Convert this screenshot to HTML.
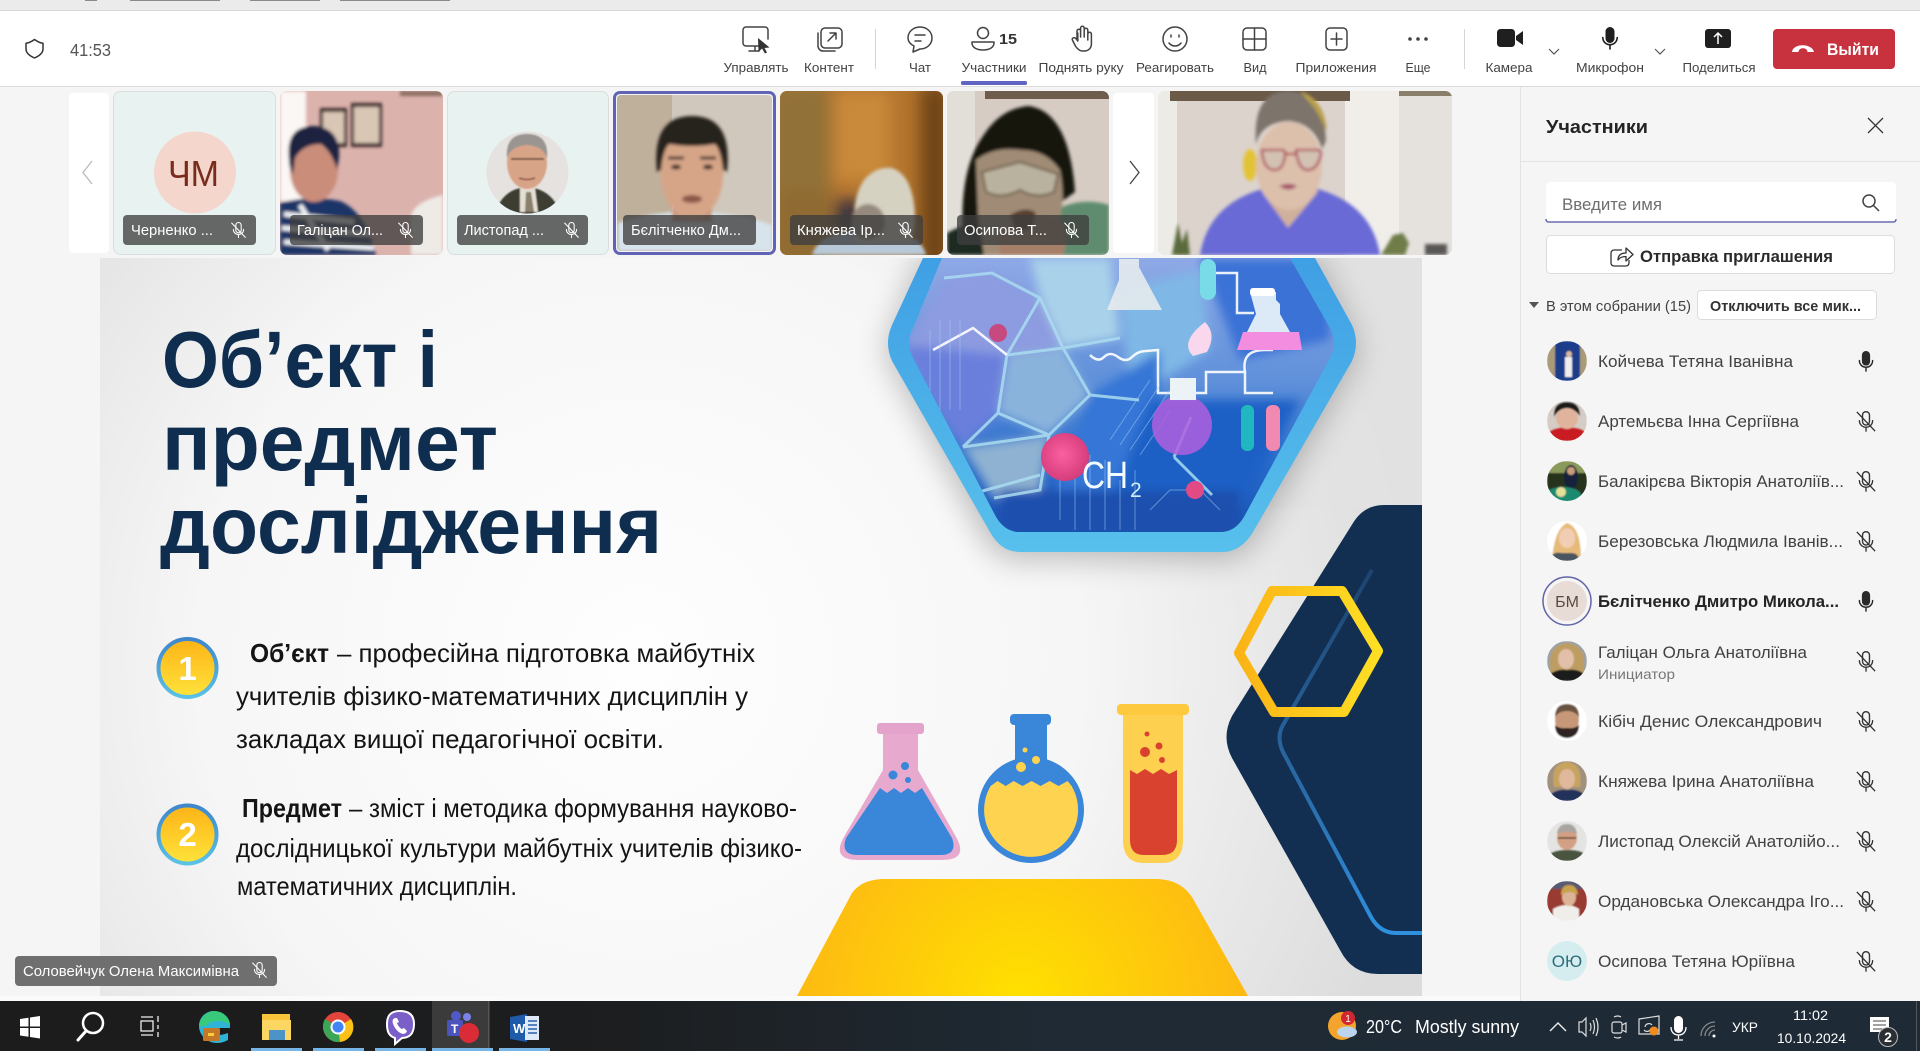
<!DOCTYPE html>
<html lang="uk"><head><meta charset="utf-8"><title>Собрание</title>
<style>
html,body{margin:0;padding:0;width:1920px;height:1051px;overflow:hidden;background:#f5f5f5}
svg{display:block;position:absolute;left:0;top:0}
text{font-family:"Liberation Sans","Noto Sans CJK SC",sans-serif}
.tb{font-size:13px;fill:#424242;text-anchor:middle}
.n{font-size:16.5px;fill:#424242}
.p{font-size:14.5px;fill:#fff}
.s{font-size:26px;fill:#141414}
.st{font-size:17px;fill:#fff}
</style></head><body>
<svg width="1920" height="1051" viewBox="0 0 1920 1051" xmlns="http://www.w3.org/2000/svg">
<defs>
<filter id="b1" x="-10%" y="-10%" width="120%" height="120%"><feGaussianBlur stdDeviation="1.6"/></filter>
<filter id="a1" x="-10%" y="-10%" width="120%" height="120%"><feGaussianBlur stdDeviation="0.9"/></filter>
<filter id="b3" x="-30%" y="-30%" width="160%" height="160%"><feGaussianBlur stdDeviation="5"/></filter>
<filter id="b8" x="-40%" y="-40%" width="180%" height="180%"><feGaussianBlur stdDeviation="8"/></filter>
<filter id="b20" x="-30%" y="-30%" width="160%" height="160%"><feGaussianBlur stdDeviation="16"/></filter>
<radialGradient id="slideBg" gradientUnits="userSpaceOnUse" cx="640" cy="660" r="800"><stop offset="0" stop-color="#fefefe"/><stop offset=".55" stop-color="#f6f6f6"/><stop offset="1" stop-color="#dcdcdc"/></radialGradient>
<linearGradient id="hexO" x1="0" y1="0" x2="0" y2="1"><stop offset="0" stop-color="#3f9fe4"/><stop offset="1" stop-color="#58c0ec"/></linearGradient>
<linearGradient id="hexI" x1="0" y1="0" x2="0" y2="1"><stop offset="0" stop-color="#8fa9e6"/><stop offset=".45" stop-color="#5f90da"/><stop offset=".75" stop-color="#2a6ccb"/><stop offset="1" stop-color="#1b50b0"/></linearGradient>
<linearGradient id="line" x1="0" y1="0" x2="0" y2="1"><stop offset="0" stop-color="#1e4470"/><stop offset=".6" stop-color="#2a6ba8"/><stop offset="1" stop-color="#2f90e0"/></linearGradient>
<linearGradient id="yh" x1="0" y1="0" x2="1" y2="0"><stop offset="0" stop-color="#fbb316"/><stop offset="1" stop-color="#fedf24"/></linearGradient>
<radialGradient id="tr" gradientUnits="userSpaceOnUse" cx="1020" cy="1000" r="230"><stop offset="0" stop-color="#ffe000"/><stop offset="1" stop-color="#fdb913"/></radialGradient>
<linearGradient id="numY" x1="0" y1="0" x2="0" y2="1"><stop offset="0" stop-color="#fcb316"/><stop offset="1" stop-color="#ffe33b"/></linearGradient>
<linearGradient id="numB" x1="0" y1="0" x2="0" y2="1"><stop offset="0" stop-color="#3f86cc"/><stop offset="1" stop-color="#59c2e6"/></linearGradient>
<linearGradient id="task" x1="0" y1="0" x2="1" y2="0"><stop offset="0" stop-color="#1c1c1c"/><stop offset=".3" stop-color="#1c1d1e"/><stop offset=".55" stop-color="#1f2a34"/><stop offset="1" stop-color="#1e2a36"/></linearGradient>
<radialGradient id="ball" cx=".45" cy=".45" r=".6"><stop offset="0" stop-color="#fb5f9f"/><stop offset="1" stop-color="#d23a78"/></radialGradient>
<clipPath id="slide"><rect x="100" y="258" width="1322" height="738"/></clipPath>
<clipPath id="hexClip"><path d="M942 258H1290L1330 328Q1338 343 1330 358L1245 515Q1236 532 1220 532H1020Q1004 532 995 515L913 358Q905 343 913 328Z"/></clipPath>
<clipPath id="t2"><rect x="280" y="91" width="163" height="164" rx="7"/></clipPath>
<clipPath id="t3"><circle cx="527.5" cy="172.5" r="41"/></clipPath>
<clipPath id="t4"><rect x="617" y="95" width="155" height="156" rx="4"/></clipPath>
<clipPath id="t5"><rect x="780" y="91" width="163" height="164" rx="7"/></clipPath>
<clipPath id="t6"><rect x="947" y="91" width="162" height="164" rx="7"/></clipPath>
<clipPath id="t7"><rect x="1158" y="91" width="294" height="164" rx="7"/></clipPath>
<clipPath id="av"><circle cx="0" cy="0" r="20"/></clipPath>
<symbol id="micoff" viewBox="0 0 20 24" overflow="visible"><path d="M6.2 4.5a3.8 3.8 0 0 1 7.6 0v7a3.8 3.8 0 0 1-7.6 0zM2.8 10.5c0 4 3 7.2 7.2 7.2s7.2-3.2 7.2-7.2M10 17.7V22" fill="none" stroke="currentColor" stroke-width="1.5" stroke-linecap="round"/><path d="M0 1l20 21" stroke="currentColor" stroke-width="1.5"/></symbol>
<symbol id="micon" viewBox="0 0 20 24" overflow="visible"><rect x="5.5" y="0" width="9" height="16" rx="4.5" fill="currentColor"/><path d="M2.8 10.5c0 4 3 7.2 7.2 7.2s7.2-3.2 7.2-7.2M10 17.7V22" fill="none" stroke="currentColor" stroke-width="1.6" stroke-linecap="round"/></symbol>
</defs>

<!-- page -->
<rect width="1920" height="1051" fill="#f5f5f5"/>
<rect width="1920" height="10" fill="#ebebeb"/>
<rect y="10" width="1920" height="1" fill="#d6d6d6"/>
<g fill="#8a8a8a"><rect x="85" y="0" width="12" height="1"/><rect x="130" y="0" width="90" height="1"/><rect x="250" y="0" width="70" height="1"/><rect x="340" y="0" width="110" height="1"/></g>

<!-- toolbar -->
<rect y="11" width="1920" height="75" fill="#fff"/>
<rect y="86" width="1920" height="1" fill="#dcdcdc"/>
<path d="M34.500 39.500C31 42 28.500 43 26 43.300V49C26 53 30 56 34.500 58 39 56 43 53 43 49V43.300C40.500 43 38 42 34.500 39.500Z" fill="none" stroke="#333" stroke-width="1.500" stroke-linejoin="round"/>
<text x="70" y="56" font-size="17.500" fill="#555" textLength="41" lengthAdjust="spacingAndGlyphs">41:53</text>

<g fill="none" stroke="#424242" stroke-width="1.500" stroke-linecap="round" stroke-linejoin="round">
<path d="M759 46H746a3 3 0 0 1-3-3V30a3 3 0 0 1 3-3h19a3 3 0 0 1 3 3v9M755 46v5M749 51h10"/>
<rect x="821" y="28" width="21" height="20" rx="4"/><path d="M818 33v13a5 5 0 0 0 5 5h12M828 41l8-8M830 33h6v6"/>
<path d="M920 27c7 0 12 5 12 11s-5 11-12 11l-7 3 1-6c-4-2-6-5-6-8 0-6 5-11 12-11zM915 35h10M915 41h6"/>
<circle cx="983" cy="33" r="5.500"/><path d="M972 42h22v1c0 4-4 7-11 7s-11-3-11-7z"/>
<path d="M1077 39V31a1.800 1.800 0 0 1 3.600 0v6M1080.600 37V28a1.800 1.800 0 0 1 3.600 0v9M1084.200 37v-7a1.800 1.800 0 0 1 3.600 0v10M1087.800 38v-4a1.800 1.800 0 0 1 3.600 0v10c0 4-3 7-7 7h-2c-3 0-5-2-7-5l-3-6c-1-2 2-3 3.500-1.500l1.900 2.500V33"/>
<circle cx="1175" cy="39" r="12"/><path d="M1169 43c3 4 9 4 12 0"/><path d="M1171 35v2M1179 35v2"/>
<rect x="1243" y="28" width="23" height="22" rx="4"/><path d="M1254.500 28v22M1243 39h23"/>
<rect x="1326" y="28" width="21" height="22" rx="4"/><path d="M1336.500 33v12M1331 39h11"/>
</g>
<path d="M758 38l11.500 9.500-5 .5 2.500 4.500-2 1-3-5-3.500 3.500z" fill="#333"/>
<circle cx="1410" cy="39" r="1.800" fill="#424242"/><circle cx="1418" cy="39" r="1.800" fill="#424242"/><circle cx="1426" cy="39" r="1.800" fill="#424242"/>
<text x="999" y="44" font-size="14.500" font-weight="700" fill="#333" textLength="18" lengthAdjust="spacingAndGlyphs">15</text>
<rect x="875" y="29" width="1" height="40" fill="#d6d6d6"/><rect x="1464" y="29" width="1" height="40" fill="#d6d6d6"/>
<rect x="1497" y="29" width="18" height="18" rx="3.500" fill="#1f1f1f"/><path d="M1516 36l7-5v14l-7-5z" fill="#1f1f1f"/>
<path d="M1549 49l5 5 5-5M1655 49l5 5 5-5" fill="none" stroke="#555" stroke-width="1.200"/>
<use href="#micon" x="1600" y="27" width="20" height="24" color="#1f1f1f"/>
<rect x="1705" y="29" width="26" height="19" rx="3" fill="#1f1f1f"/><path d="M1718 44V34M1714 37l4-4 4 4" fill="none" stroke="#fff" stroke-width="1.500"/>
<rect x="1773" y="29" width="122" height="40" rx="4" fill="#c8323f"/>
<path d="M1792 52c1-9 20-9 22 0l-6.500 0c0-5-9-5-9 0z" fill="#fff"/>
<text x="1827" y="55" class="st" font-weight="700" textLength="52" lengthAdjust="spacingAndGlyphs">Выйти</text>
<g>
<text x="756" y="72" class="tb" textLength="65" lengthAdjust="spacingAndGlyphs">Управлять</text>
<text x="829" y="72" class="tb" textLength="50" lengthAdjust="spacingAndGlyphs">Контент</text>
<text x="920" y="72" class="tb" textLength="22" lengthAdjust="spacingAndGlyphs">Чат</text>
<text x="994" y="72" class="tb" textLength="65" lengthAdjust="spacingAndGlyphs">Участники</text>
<text x="1081" y="72" class="tb" textLength="85" lengthAdjust="spacingAndGlyphs">Поднять руку</text>
<text x="1175" y="72" class="tb" textLength="78" lengthAdjust="spacingAndGlyphs">Реагировать</text>
<text x="1255" y="72" class="tb" textLength="23" lengthAdjust="spacingAndGlyphs">Вид</text>
<text x="1336" y="72" class="tb" textLength="81" lengthAdjust="spacingAndGlyphs">Приложения</text>
<text x="1418" y="72" class="tb" textLength="25" lengthAdjust="spacingAndGlyphs">Еще</text>
<text x="1509" y="72" class="tb" textLength="47" lengthAdjust="spacingAndGlyphs">Камера</text>
<text x="1610" y="72" class="tb" textLength="68" lengthAdjust="spacingAndGlyphs">Микрофон</text>
<text x="1719" y="72" class="tb" textLength="73" lengthAdjust="spacingAndGlyphs">Поделиться</text>
</g>
<rect x="961" y="81" width="66" height="4" rx="1.500" fill="#6264c4"/>

<!-- video strip -->
<rect x="69" y="93" width="40" height="160" rx="4" fill="#fff"/>
<path d="M92 161l-9 11.500 9 11.500" fill="none" stroke="#bbb" stroke-width="1.300"/>
<!-- tile 1 -->
<rect x="113.500" y="91.500" width="162" height="163" rx="7" fill="#e8f2f0" stroke="#d9dedd"/>
<circle cx="195" cy="172.500" r="41" fill="#f4d6cc"/>
<text x="168" y="186" font-size="36" fill="#7a2c1c" textLength="51" lengthAdjust="spacingAndGlyphs">ЧМ</text>
<!-- tile 2 -->
<g clip-path="url(#t2)"><rect x="280" y="91" width="163" height="164" fill="#dcb2ad"/>
<g filter="url(#b1)"><rect x="280" y="91" width="26" height="110" fill="#fbf7f4"/><rect x="320" y="108" width="27" height="39" fill="#3a2a2c"/><rect x="323" y="112" width="21" height="31" fill="#d9c6b4"/><rect x="351" y="103" width="31" height="44" fill="#3a2a2c"/><rect x="354" y="107" width="25" height="36" fill="#d9c6b4"/>
<rect x="400" y="91" width="43" height="5" fill="#8a6e60"/>
<path d="M411 255v-40q5-14 32-20v60z" fill="#eeeae6"/>
<path d="M280 255v-52q30-8 60-2 25 10 36 54z" fill="#1a3568"/>
<path d="M284 214l70 8M282 228l88 6M284 242l90 6M300 205l28 45" stroke="#eef1f4" stroke-width="5" fill="none"/>
<ellipse cx="314" cy="170" rx="24" ry="32" fill="#c98d7a"/>
<path d="M289 160q-4-34 25-34 27 2 25 32l-2 12q-5-18-16-26-18 0-26 14l-2 16q-4-6-4-14z" fill="#1d2440"/>
</g></g>
<!-- tile 3 -->
<rect x="447.500" y="91.500" width="161" height="163" rx="7" fill="#e8f2f0" stroke="#d9dedd"/>
<g clip-path="url(#t3)"><rect x="486" y="131" width="83" height="83" fill="#e5e2df"/>
<g filter="url(#a1)"><path d="M495 215q6-26 32-28 26 2 34 28z" fill="#3c3c30"/><path d="M520 188h15l3 24h-18z" fill="#e4dfd4"/><path d="M526 192l5 0 3 20h-9z" fill="#8a7f6a"/>
<ellipse cx="527" cy="163" rx="20" ry="26" fill="#d8a487"/><path d="M507 158q-2-24 20-24 22 0 20 24-4-12-20-13-16 1-20 13z" fill="#9a9590"/>
<path d="M511 159h13M531 159h13M524 159h7" stroke="#5a4030" stroke-width="1.500"/><path d="M519 178q8 3 16 0" stroke="#8a4b3c" stroke-width="1.500" fill="none"/></g></g>
<!-- tile 4 -->
<rect x="613" y="91" width="163" height="164" rx="7" fill="#6163b5"/>
<rect x="616" y="94" width="157" height="158" rx="4" fill="#f4f4f8"/>
<g clip-path="url(#t4)"><rect x="617" y="95" width="155" height="156" fill="#d0c8bc"/><rect x="617" y="95" width="55" height="156" fill="#bfb09c"/>
<g filter="url(#b1)"><path d="M618 251v-28q30-10 70-12 50 2 84 14v26z" fill="#d8e4ec"/><rect x="672" y="192" width="40" height="30" fill="#c99a80"/>
<path d="M660 160q0-32 32-32 32 0 32 32 0 36-12 48-10 12-20 12-10 0-20-12-12-12-12-48z" fill="#d6a587"/>
<path d="M657 172q-6-56 35-56 41 0 35 56l-4-2q-2-20-8-26-22 4-46 0-6 6-8 26z" fill="#27201d"/>
<path d="M668 158h16M700 158h16" stroke="#2a2320" stroke-width="3"/><ellipse cx="676" cy="167" rx="5" ry="2.500" fill="#3a2c24"/><ellipse cx="708" cy="167" rx="5" ry="2.500" fill="#3a2c24"/><ellipse cx="692" cy="199" rx="10" ry="4" fill="#8d5648"/></g></g>
<!-- tile 5 -->
<g clip-path="url(#t5)"><rect x="780" y="91" width="163" height="164" fill="#b3742e"/>
<g filter="url(#b8)"><rect x="770" y="85" width="60" height="180" fill="#927137"/><rect x="835" y="91" width="55" height="90" fill="#c98a3a"/><rect x="920" y="85" width="30" height="180" fill="#6f4519"/><rect x="780" y="190" width="50" height="70" fill="#8f6a30"/><rect x="835" y="200" width="26" height="34" fill="#34313f"/></g>
<g filter="url(#b1)"><path d="M812 255q6-20 40-24h40q30 6 34 24z" fill="#b7c9d8"/><path d="M856 240q-6-40 8-60 12-14 28-12 18 6 22 36 3 24-4 38h-50z" fill="#d6d2c2"/><ellipse cx="868" cy="222" rx="17" ry="18" fill="#96897e"/></g></g>
<!-- tile 6 -->
<g clip-path="url(#t6)"><rect x="947" y="91" width="162" height="164" fill="#d6ccc4"/><rect x="947" y="91" width="28" height="164" fill="#e2ded8"/><rect x="985" y="91" width="124" height="8" fill="#6e5c4c"/>
<g filter="url(#b1)"><path d="M1047 255v-40q30-20 62-10v50z" fill="#5f8c6e"/><path d="M947 255v-22q20-12 50-10v32z" fill="#1f2a22"/>
<path d="M963 236q-4-66 20-100 18-28 46-30 40 6 46 86l-14 10-30-50-40 20-6 60z" fill="#141210"/>
<path d="M976 160q18-14 46-10 24 0 38 20 6 30-2 56l-12 29h-62l-6-40z" fill="#a08c76"/>
<path d="M982 172l38-10 38 12-4 18q-18 8-34-2-18 10-34 2z" fill="#b9b29e" stroke="#6a5a46" stroke-width="2"/>
<path d="M1000 255q-6-30 25-36 34-8 40 10 3 10-2 26z" fill="#a67f68"/><path d="M1010 215q16-10 26-2l-4 16-16 2z" fill="#5a4030"/></g></g>
<rect x="1113" y="93" width="41" height="160" rx="4" fill="#fff"/>
<path d="M1130 161l9 11.500-9 11.500" fill="none" stroke="#444" stroke-width="1.300"/>
<!-- tile 7 -->
<g clip-path="url(#t7)"><rect x="1158" y="91" width="294" height="164" fill="#dcd3cd"/><rect x="1158" y="91" width="19" height="164" fill="#ecebe6"/><rect x="1345" y="91" width="54" height="164" fill="#f1eeea"/><rect x="1399" y="91" width="53" height="164" fill="#e5e2de"/><rect x="1170" y="91" width="180" height="10" fill="#6a5a47"/><rect x="1399" y="91" width="53" height="5" fill="#8a7f6a"/>
<g filter="url(#b1)"><path d="M1172 255l6-32 4 20 5-14 3 26z" fill="#5a6b3a"/><path d="M1381 255l12-20 10-2 6 10-4 12z" fill="#6f7d48"/><rect x="1425" y="244" width="22" height="11" fill="#5a5654"/>
<path d="M1200 255q8-50 62-66h56q54 16 62 66z" fill="#696ad6"/>
<path d="M1262 192l26 36 30-36-8-14h-42z" fill="#d0b09c"/>
<ellipse cx="1250" cy="165" rx="7" ry="16" fill="#e3c336"/>
<ellipse cx="1289" cy="166" rx="33" ry="44" fill="#dcc0ac"/>
<path d="M1256 145q-4-52 30-54 38 0 40 50l-4 8q-8-26-34-28-28 2-32 24z" fill="#7d756c"/>
<path d="M1300 91q24 8 27 40l-12-22z" fill="#b89f4a"/>
<path d="M1262 150h20q4 0 3 6-2 14-10 14-12 0-13-20zM1296 150h22q4 0 2 8-4 12-12 12-10 0-12-20zM1285 154h11" fill="#c9c2b8" fill-opacity=".5" stroke="#a82a4a" stroke-width="2"/>
<path d="M1279 186q10-4 18 0-8 7-18 0z" fill="#a4516a"/></g></g>
<!-- name pills -->
<g fill="#3d3d3d" fill-opacity=".78">
<rect x="123" y="215" width="133" height="30" rx="4" fill="#5e5e5e" fill-opacity=".95"/><rect x="290" y="215" width="133" height="30" rx="4"/><rect x="457" y="215" width="131" height="30" rx="4" fill="#5e5e5e" fill-opacity=".95"/><rect x="623" y="215" width="133" height="30" rx="4"/><rect x="790" y="215" width="133" height="30" rx="4"/><rect x="957" y="215" width="132" height="30" rx="4"/>
</g>
<text x="131" y="235" class="p" textLength="82" lengthAdjust="spacingAndGlyphs">Черненко ...</text>
<text x="297" y="235" class="p" textLength="86" lengthAdjust="spacingAndGlyphs">Галіцан Ол...</text>
<text x="464" y="235" class="p" textLength="80" lengthAdjust="spacingAndGlyphs">Листопад ...</text>
<text x="631" y="235" class="p" textLength="110" lengthAdjust="spacingAndGlyphs">Бєлітченко Дм...</text>
<text x="797" y="235" class="p" textLength="88" lengthAdjust="spacingAndGlyphs">Княжева Ір...</text>
<text x="964" y="235" class="p" textLength="83" lengthAdjust="spacingAndGlyphs">Осипова Т...</text>
<g color="#fff"><use href="#micoff" x="231" y="222" width="15" height="17"/><use href="#micoff" x="398" y="222" width="15" height="17"/><use href="#micoff" x="564" y="222" width="15" height="17"/><use href="#micoff" x="898" y="222" width="15" height="17"/><use href="#micoff" x="1064" y="222" width="15" height="17"/></g>

<!-- slide -->
<rect x="0" y="996" width="1520" height="5" fill="#fafafa"/>
<g clip-path="url(#slide)">
<rect x="100" y="258" width="1322" height="738" fill="url(#slideBg)"/>
<rect x="1200" y="258" width="222" height="250" fill="#e2e2e2" opacity=".7"/>
<path d="M923 250H1315L1352 328Q1360 343 1352 358L1255 530Q1244 552 1225 552H1015Q996 552 985 530L892 358Q884 343 892 328Z" fill="#000" opacity=".26" filter="url(#b20)" transform="translate(0,6)"/>
<path d="M923 258H1315L1352 325Q1360 343 1352 361L1253 532Q1241 552 1222 552H1020Q1001 552 990 532L892 361Q884 343 892 325Z" fill="url(#hexO)"/>
<g clip-path="url(#hexClip)">
<rect x="900" y="258" width="440" height="275" fill="url(#hexI)"/>
<g filter="url(#b3)">
<path d="M905 345L944 278 992 273 1040 298 1063 348 1007 355z" fill="#8d9be0"/>
<path d="M1007 355L1063 348 1090 395 1049 435 998 413z" fill="#8ab3dc"/>
<path d="M905 345L1007 355 998 413 963 447 930 400z" fill="#6a7fdc"/>
<path d="M963 447L1049 435 1040 490 994 498z" fill="#8fb2d2"/>
<path d="M1040 298L1030 258H1110L1120 338 1063 348z" fill="#a9d2ea"/>
<path d="M1120 290L1200 270 1210 350 1130 400z" fill="#7fb8e6"/>
<path d="M1090 395L1160 350V530H1040z" fill="#3476d6"/>
<path d="M1200 258H1330V340L1240 360z" fill="#3a72d6"/>
<path d="M1150 400H1300L1230 530H1100z" fill="#1f60c6"/>
<path d="M1000 490H1240V535H1000z" fill="#1a4fae"/>
</g>
<g fill="none" stroke="#a9dcf0" stroke-width="3" opacity=".85"><path d="M944 278L992 273L1040 298L1063 348L1007 355L998 413L963 447M998 413L1049 435L1090 395L1063 348L1120 338M1007 355L1040 298M1049 435L1040 490L994 498M1090 395L1139 400M1174 457L1212 495M1174 457L1191 417M963 447L1049 435M950 500L1040 475"/></g>
<g fill="none" stroke="#fff" stroke-width="2.500" opacity=".9"><path d="M933 350L973 328L1007 355M1090 355q8 8 14 2t14 0 14 0 14-6l12-1v43h48v-21h39v21h28M1216 273h21v40h17M1245 372q-4-22 20-22h8"/></g>
<g fill="none" stroke="#9cc8f0" stroke-width="1" opacity=".55"><path d="M1060 440v80M1075 450v80M1090 455v75M1105 460v70M1120 480v50M1135 470v60M1150 510l20-20h30l20 20M1110 440l40-60M1120 445l40-60M1130 450l40-60M1140 455l30-44M930 330v70M940 320v90M950 320v90M960 320v90"/></g>
<circle cx="1065" cy="457" r="24" fill="url(#ball)"/><circle cx="998" cy="333" r="9" fill="#c64a7f"/><circle cx="1195" cy="490" r="9" fill="#e24a86"/>
<path d="M1119 259h20v8l23 43h-55l12-30z" fill="#e6ebed" opacity=".9"/><rect x="1200" y="259" width="16" height="41" rx="8" fill="#7adbe8"/>
<path d="M1250 292h26v8l4 4v10l20 36h-62l18-36z" fill="#eef7fb" opacity=".9"/><path d="M1243 332h56l3 18h-65z" fill="#f38de0"/><rect x="1250" y="288" width="25" height="8" rx="3" fill="#fff"/>
<path d="M1205 322q12 12 2 30l-14 4q-14-14 12-34z" fill="#f9d8ee"/>
<ellipse cx="1182" cy="425" rx="30" ry="30" fill="#b05fdd" opacity=".85"/><rect x="1170" y="378" width="26" height="22" fill="#ecf3f7"/>
<rect x="1241" y="405" width="13" height="46" rx="6" fill="#21b7c1"/><rect x="1266" y="405" width="14" height="46" rx="6" fill="#f08ab0"/>
<text x="1082" y="488" font-size="38" fill="#f2fbff" textLength="46" lengthAdjust="spacingAndGlyphs">CH</text>
<text x="1130" y="497" font-size="21" fill="#cfeef8">2</text>
</g>
<!-- navy shape -->
<path d="M1422 505H1384Q1364 505 1353 523L1232 716Q1221 737 1232 758L1340 950Q1352 974 1378 974H1422Z" fill="#122f52"/>
<path d="M1372 570L1283 725Q1276 737 1283 752L1371 917Q1380 933 1396 933H1422" fill="none" stroke="url(#line)" stroke-width="4"/>
<path d="M1272 591H1342L1378 651L1344 712H1274L1239 653Z" fill="none" stroke="url(#yh)" stroke-width="10" stroke-linejoin="round"/>
<!-- yellow table -->
<path d="M797 996L852 893Q862 879 885 879H1155Q1180 879 1192 897L1248 996Z" fill="url(#tr)"/>
<!-- pink flask -->
<path d="M883 730V770L845 835Q830 860 858 860H942Q970 860 955 835L918 770V730Z" fill="#e8a9cf"/><rect x="877" y="723" width="47" height="11" rx="3" fill="#e3a3ca"/>
<path d="M880 788l7 5 7-5 7 5 7-5 7 5 7-5 30 50q6 17-12 17H858q-18 0-12-17z" fill="#3a86d8"/>
<circle cx="893" cy="775" r="4.500" fill="#3a86d8"/><circle cx="905" cy="766" r="4" fill="#3a86d8"/><circle cx="908" cy="780" r="3" fill="#3a86d8"/>
<!-- round flask -->
<rect x="1015" y="720" width="32" height="45" fill="#3a86d8"/><rect x="1010" y="714" width="41" height="11" rx="4" fill="#3a86d8"/><circle cx="1031" cy="810" r="53" fill="#3a86d8"/>
<path d="M990.600 786l7-5 8 5 8-5 9 5 9-5 9 5 9-5 9 5 9-5 4 5A47 47 0 1 1 990.600 786z" fill="#fdd34f"/>
<circle cx="1021" cy="767" r="5" fill="#fdd34f"/><circle cx="1036" cy="760" r="4" fill="#fdd34f"/><circle cx="1025" cy="750" r="2.500" fill="#fdd34f"/>
<!-- tube -->
<path d="M1123 712H1183V840Q1183 863 1162 863H1144Q1123 863 1123 840Z" fill="#fdd050"/><rect x="1117" y="704" width="72" height="11" rx="4" fill="#fdc93e"/>
<path d="M1130 770l7 4 8-5 8 5 8-5 8 5 8-4V840Q1177 855 1162 855H1144Q1130 855 1130 840Z" fill="#d9422e"/>
<circle cx="1145" cy="752" r="5" fill="#d9422e"/><circle cx="1159" cy="746" r="3.500" fill="#d9422e"/><circle cx="1162" cy="760" r="3" fill="#d9422e"/><circle cx="1147" cy="734" r="2.500" fill="#d9422e"/>
<!-- title -->
<g fill="#0f2d4f" font-weight="700" font-size="80">
<text x="162" y="387" textLength="276" lengthAdjust="spacingAndGlyphs">Об’єкт і</text>
<text x="162" y="470" textLength="336" lengthAdjust="spacingAndGlyphs">предмет</text>
<text x="160" y="553" textLength="502" lengthAdjust="spacingAndGlyphs">дослідження</text>
</g>
<!-- bullets -->
<circle cx="187.500" cy="668" r="29" fill="url(#numY)" stroke="url(#numB)" stroke-width="4"/><text x="187.500" y="680" font-size="33" font-weight="700" fill="#fff" text-anchor="middle">1</text>
<circle cx="187.500" cy="834.500" r="29" fill="url(#numY)" stroke="url(#numB)" stroke-width="4"/><text x="187.500" y="846" font-size="33" font-weight="700" fill="#fff" text-anchor="middle">2</text>
<text x="250" y="662" class="s" font-weight="700" textLength="79" lengthAdjust="spacingAndGlyphs">Об’єкт</text>
<text x="337" y="662" class="s" textLength="418" lengthAdjust="spacingAndGlyphs">– професійна підготовка майбутніх</text>
<text x="236" y="705" class="s" textLength="512" lengthAdjust="spacingAndGlyphs">учителів фізико-математичних дисциплін у</text>
<text x="236" y="748" class="s" textLength="428" lengthAdjust="spacingAndGlyphs">закладах вищої педагогічної освіти.</text>
<text x="242" y="817" class="s" font-weight="700" textLength="100" lengthAdjust="spacingAndGlyphs">Предмет</text>
<text x="349" y="817" class="s" textLength="448" lengthAdjust="spacingAndGlyphs">– зміст і методика формування науково-</text>
<text x="236" y="857" class="s" textLength="566" lengthAdjust="spacingAndGlyphs">дослідницької культури майбутніх учителів фізико-</text>
<text x="237" y="895" class="s" textLength="280" lengthAdjust="spacingAndGlyphs">математичних дисциплін.</text>
</g>
<rect x="15" y="956" width="262" height="30" rx="4" fill="#6f6f6f"/>
<text x="23" y="976" class="p" textLength="216" lengthAdjust="spacingAndGlyphs">Соловейчук Олена Максимівна</text>
<use href="#micoff" x="252" y="962" width="15" height="17" color="#fff"/>

<!-- right panel -->
<rect x="1521" y="87" width="399" height="914" fill="#f5f5f5"/>
<rect x="1520" y="87" width="1" height="914" fill="#e2e2e2"/>
<rect x="1521" y="161" width="399" height="1" fill="#e2e2e2"/>
<text x="1546" y="133" font-size="18.500" font-weight="700" fill="#242424" textLength="102" lengthAdjust="spacingAndGlyphs">Участники</text>
<path d="M1868 118l15 15M1883 118l-15 15" stroke="#333" stroke-width="1.300"/>
<rect x="1546" y="182" width="350" height="40" rx="4" fill="#fff"/><path d="M1546 219q0 3 3 3H1893q3 0 3-3" fill="none" stroke="#6a6cb0" stroke-width="1.500"/>
<text x="1562" y="210" font-size="16.500" fill="#6e6e6e" textLength="100" lengthAdjust="spacingAndGlyphs">Введите имя</text>
<circle cx="1869" cy="201" r="6" fill="none" stroke="#424242" stroke-width="1.500"/><path d="M1873.500 205.500l5.500 5.500" stroke="#424242" stroke-width="1.500"/>
<rect x="1546.500" y="235.500" width="348" height="38" rx="4" fill="#fff" stroke="#dcdcdc"/>
<path d="M1622 250h-8a3 3 0 0 0-3 3v10a3 3 0 0 0 3 3h12a3 3 0 0 0 3-3v-3M1618 260c0-5 3-7 8-7v-5l7 6.500-7 6.500v-4.500c-4 0-6 1-8 3.500z" fill="none" stroke="#333" stroke-width="1.300" stroke-linejoin="round"/>
<text x="1640" y="262" font-size="16.500" font-weight="700" fill="#2a2a2a" textLength="193" lengthAdjust="spacingAndGlyphs">Отправка приглашения</text>
<path d="M1529 302h10l-5 6z" fill="#555"/>
<text x="1546" y="311" font-size="15" fill="#424242" textLength="145" lengthAdjust="spacingAndGlyphs">В этом собрании (15)</text>
<rect x="1697.500" y="290.500" width="179" height="29" rx="4" fill="#fff" stroke="#dcdcdc"/>
<text x="1710" y="311" font-size="15" font-weight="700" fill="#333" textLength="151" lengthAdjust="spacingAndGlyphs">Отключить все мик...</text>

<!-- avatars -->
<g transform="translate(1567,361)"><g clip-path="url(#av)" filter="url(#a1)"><rect x="-20" y="-20" width="40" height="40" fill="#a99a78"/><rect x="-12" y="-20" width="25" height="40" fill="#1e3c8a"/><rect x="-2" y="-4" width="7" height="20" fill="#eee"/><circle cx="2" cy="-7" r="3" fill="#d9b8a0"/></g></g>
<g transform="translate(1567,421)"><g clip-path="url(#av)" filter="url(#a1)"><rect x="-20" y="-20" width="40" height="40" fill="#d5cdc5"/><path d="M-20 20v-8q10-7 20-5 12-2 20 5v8z" fill="#c81e24"/><ellipse cx="0" cy="-3" rx="11" ry="11" fill="#e0b39c"/><path d="M-13-4q-1-15 13-15 13 0 13 14-6-8-13-8-8 0-13 9z" fill="#1f1a1a"/></g></g>
<g transform="translate(1567,481)"><g clip-path="url(#av)" filter="url(#a1)"><rect x="-20" y="-20" width="40" height="40" fill="#26301f"/><rect x="-20" y="-20" width="40" height="12" fill="#8a9a5a"/><ellipse cx="4" cy="-4" rx="7" ry="12" fill="#16243a"/><circle cx="4" cy="-10" r="4" fill="#c99c7a"/><ellipse cx="-4" cy="14" rx="18" ry="8" fill="#1f8a70"/><circle cx="-6" cy="11" r="5" fill="#e4e09a"/></g></g>
<g transform="translate(1567,541)"><g clip-path="url(#av)" filter="url(#a1)"><rect x="-20" y="-20" width="40" height="40" fill="#fff"/><path d="M-15 20q2-32 15-38 14 4 14 36z" fill="#e6bb79"/><ellipse cx="0" cy="-3" rx="8" ry="10" fill="#f1cdb4"/><path d="M-20 20q6-10 14-8h10q8 0 8 8z" fill="#4a5560"/></g></g>
<circle cx="1567" cy="601" r="24" fill="none" stroke="#6264a7" stroke-width="1.500"/><circle cx="1567" cy="601" r="20" fill="#e8dcd6"/><text x="1567" y="607" font-size="16" fill="#5b4a42" text-anchor="middle">БМ</text>
<g transform="translate(1567,661)"><g clip-path="url(#av)" filter="url(#a1)"><rect x="-20" y="-20" width="40" height="40" fill="#9aa2a8"/><path d="M-16 14q-6-30 16-32 22 2 16 32z" fill="#bd9d62"/><ellipse cx="-1" cy="-2" rx="8" ry="10" fill="#e2bfa8"/><path d="M-20 20v-5q10-8 20-6 12-2 20 6v5z" fill="#1c1a1a"/></g></g>
<g transform="translate(1567,721)"><g clip-path="url(#av)" filter="url(#a1)"><rect x="-20" y="-20" width="40" height="40" fill="#fff"/><ellipse cx="0" cy="-1" rx="12" ry="16" fill="#c69877"/><path d="M-12-4q0-13 12-13t12 13q-4-6-12-6t-12 6z" fill="#6a5240"/><path d="M-12 4q4 4 12 3 8 1 12-3 0 12-12 13-12-1-12-13z" fill="#2e2420"/></g></g>
<g transform="translate(1567,781)"><g clip-path="url(#av)" filter="url(#a1)"><rect x="-20" y="-20" width="40" height="40" fill="#a0917e"/><path d="M-13 6q-4-24 13-25 16 1 13 25z" fill="#c7a361"/><ellipse cx="0" cy="-2" rx="8" ry="10" fill="#e0b89c"/><path d="M-20 20v-4q10-9 20-7 12-2 20 7v4z" fill="#20305a"/></g></g>
<g transform="translate(1567,841)"><g clip-path="url(#av)" filter="url(#a1)"><rect x="-20" y="-20" width="40" height="40" fill="#e4e4e2"/><path d="M-20 20v-6q10-6 20-5 12-1 20 5v6z" fill="#4a5440"/><ellipse cx="0" cy="-3" rx="10" ry="12" fill="#d3a084"/><path d="M-10-7q1-10 10-10t10 10q-10-5-20 0z" fill="#a8a5a0"/><path d="M-9-3h18" stroke="#5a4030" stroke-width="1.500"/></g></g>
<g transform="translate(1567,901)"><g clip-path="url(#av)" filter="url(#a1)"><rect x="-20" y="-20" width="40" height="40" fill="#9a3a30"/><rect x="-20" y="-20" width="40" height="8" fill="#5a5a70"/><path d="M-14 20v-12q14-8 26 0v12z" fill="#efeeea"/><ellipse cx="2" cy="-4" rx="7" ry="9" fill="#dcb397"/><path d="M-6-6q0-10 8-10t9 10q-9-6-17 0z" fill="#c8a24a"/></g></g>
<circle cx="1567" cy="961" r="20" fill="#d6edf0"/><text x="1567" y="967" font-size="17" fill="#2a6e7c" text-anchor="middle">ОЮ</text>
<!-- names -->
<text x="1598" y="367" class="n" textLength="195" lengthAdjust="spacingAndGlyphs">Койчева Тетяна Іванівна</text>
<text x="1598" y="427" class="n" textLength="201" lengthAdjust="spacingAndGlyphs">Артемьєва Інна Сергіївна</text>
<text x="1598" y="487" class="n" textLength="246" lengthAdjust="spacingAndGlyphs">Балакірєва Вікторія Анатоліїв...</text>
<text x="1598" y="547" class="n" textLength="245" lengthAdjust="spacingAndGlyphs">Березовська Людмила Іванів...</text>
<text x="1598" y="607" class="n" font-weight="700" style="fill:#242424" textLength="241" lengthAdjust="spacingAndGlyphs">Бєлітченко Дмитро Микола...</text>
<text x="1598" y="658" class="n" textLength="209" lengthAdjust="spacingAndGlyphs">Галіцан Ольга Анатоліївна</text>
<text x="1598" y="679" font-size="14" fill="#777" textLength="77" lengthAdjust="spacingAndGlyphs">Инициатор</text>
<text x="1598" y="727" class="n" textLength="224" lengthAdjust="spacingAndGlyphs">Кібіч Денис Олександрович</text>
<text x="1598" y="787" class="n" textLength="216" lengthAdjust="spacingAndGlyphs">Княжева Ірина Анатоліївна</text>
<text x="1598" y="847" class="n" textLength="242" lengthAdjust="spacingAndGlyphs">Листопад Олексій Анатолійо...</text>
<text x="1598" y="907" class="n" textLength="246" lengthAdjust="spacingAndGlyphs">Ордановська Олександра Іго...</text>
<text x="1598" y="967" class="n" textLength="197" lengthAdjust="spacingAndGlyphs">Осипова Тетяна Юріївна</text>
<g color="#333">
<use href="#micon" x="1856" y="351" width="20" height="22" color="#2a2a2a"/>
<use href="#micoff" x="1856" y="411" width="20" height="22"/>
<use href="#micoff" x="1856" y="471" width="20" height="22"/>
<use href="#micoff" x="1856" y="531" width="20" height="22"/>
<use href="#micon" x="1856" y="591" width="20" height="22" color="#2a2a2a"/>
<use href="#micoff" x="1856" y="651" width="20" height="22"/>
<use href="#micoff" x="1856" y="711" width="20" height="22"/>
<use href="#micoff" x="1856" y="771" width="20" height="22"/>
<use href="#micoff" x="1856" y="831" width="20" height="22"/>
<use href="#micoff" x="1856" y="891" width="20" height="22"/>
<use href="#micoff" x="1856" y="951" width="20" height="22"/>
</g>

<!-- taskbar -->
<rect y="1001" width="1920" height="50" fill="url(#task)"/>
<path d="M20 1019l8.500-1.300v8.800H20zM30 1017.500l10-1.500v10.500H30zM20 1028h8.500v8.800L20 1035.500zM30 1028h10v10.500l-10-1.500z" fill="#fff"/>
<circle cx="93" cy="1023" r="10" fill="none" stroke="#fff" stroke-width="2.500"/><path d="M86 1031l-8 9" stroke="#fff" stroke-width="3" stroke-linecap="round"/>
<g fill="none" stroke="#eee" stroke-width="1.300"><rect x="141" y="1021" width="12" height="10"/><path d="M141 1017h12M141 1035h12M158 1016v6M158 1025v4M158 1032v5"/></g>
<path d="M199 1026c0-9 7-15 15-15 9 0 16 7 16 14v3h-20c0 4 4 7 9 7 3 0 6-1 9-2v7c-4 2-7 3-11 3-10 0-18-8-18-17z" fill="#2fb4d8"/><path d="M199 1026c1-9 8-15 15-15 9 0 16 7 16 14-5-5-20-6-24 1z" fill="#38c97a"/><rect x="203" y="1028" width="17" height="13" rx="1.500" fill="#c57728"/><rect x="208" y="1033" width="6" height="3" fill="#ffcc3a"/>
<rect x="262" y="1014" width="28" height="8" fill="#f8c53a"/><rect x="262" y="1020" width="29" height="20" fill="#fbd663"/><rect x="269" y="1030" width="16" height="10" fill="#4c93c8"/>
<circle cx="338" cy="1027" r="15" fill="#e3453a"/><path d="M338 1027L325 1034A15 15 0 0 0 340 1042Z" fill="#3aa757"/><path d="M338 1027L351 1019A15 15 0 0 1 340 1042Z" fill="#fbc116"/><path d="M338 1027L325 1034A15 15 0 0 1 325 1019Z" fill="#3aa757"/><circle cx="338" cy="1027" r="7.500" fill="#fff"/><circle cx="338" cy="1027" r="5.500" fill="#4285f4"/>
<path d="M400 1011c9 0 14 4 14 13 0 10-5 14-12 14l-7 6v-6c-6-2-8-6-8-14 0-9 4-13 13-13z" fill="#7a5fc8" stroke="#fff" stroke-width="2"/><path d="M395 1018c-3 1-3 4-1 8 2 4 5 7 9 8 2 0 4-2 4-3l-3-3-2 1c-2-1-4-3-5-6l2-1-2-4z" fill="#fff"/>
<rect x="432" y="1001" width="57" height="50" fill="#3b3b3b"/><rect x="488" y="1001" width="1.500" height="50" fill="#555"/>
<circle cx="467" cy="1017" r="4" fill="#7b83eb"/><circle cx="456" cy="1016" r="5" fill="#5059c9"/><rect x="447" y="1020" width="16" height="16" rx="1.500" fill="#4b53bc"/><text x="451" y="1033" font-size="12" font-weight="700" fill="#fff">T</text><circle cx="469" cy="1033" r="10" fill="#d92c36"/>
<path d="M510 1017l17-3v28l-17-3z" fill="#1f5baa"/><rect x="525" y="1016" width="14" height="24" fill="#dfe9f7"/><path d="M528 1021h9M528 1025h9M528 1029h9M528 1033h9" stroke="#2a5fa8" stroke-width="1.500"/><text x="513" y="1033" font-size="13" font-weight="700" fill="#fff">W</text>
<g fill="#76b5e6"><rect x="251" y="1048" width="51" height="3"/><rect x="313" y="1048" width="51" height="3"/><rect x="375" y="1048" width="51" height="3"/><rect x="432" y="1048" width="61" height="3"/><rect x="499" y="1048" width="51" height="3"/></g>
<circle cx="1342" cy="1026" r="14" fill="#f4a42c"/><ellipse cx="1347" cy="1032" rx="10" ry="5.500" fill="#bcd4ec"/><circle cx="1348" cy="1018" r="7" fill="#d1272f"/><text x="1348" y="1022" font-size="10" fill="#fff" text-anchor="middle">1</text>
<text x="1366" y="1033" font-size="18" fill="#fff" textLength="36" lengthAdjust="spacingAndGlyphs">20°C</text>
<text x="1415" y="1033" font-size="18" fill="#fff" textLength="104" lengthAdjust="spacingAndGlyphs">Mostly sunny</text>
<path d="M1550 1031l8-8 8 8" fill="none" stroke="#eee" stroke-width="1.400"/>
<g fill="none" stroke="#ddd" stroke-width="1.200"><path d="M1579 1022h3l4-4v18l-4-4h-3zM1590 1023q2 4 0 8M1593 1020q3 7 0 14M1596 1018q4 9 0 18"/><rect x="1612" y="1022" width="10" height="11" rx="2"/><path d="M1622 1025l4-2v9l-4-2M1614 1017q4-2 7 0M1614 1037q4 2 7 0"/><path d="M1639 1019l20-3v18h-20zM1645 1027a4 4 0 0 1 7-2M1651 1028a4 4 0 0 1-7 2"/></g>
<circle cx="1654" cy="1031" r="4.500" fill="#f18a1f"/>
<rect x="1674" y="1016" width="9" height="17" rx="4.500" fill="#fff"/><path d="M1671 1027c0 5 3 8 7.500 8s7.500-3 7.500-8M1678.500 1035v4M1674 1040h9" fill="none" stroke="#fff" stroke-width="1.300"/>
<g fill="none" stroke="#888" stroke-width="1.300"><path d="M1701 1036a14 14 0 0 1 14-14M1705 1036a10 10 0 0 1 10-10M1709 1036a6 6 0 0 1 6-6"/></g><circle cx="1714" cy="1036" r="1.500" fill="#fff"/>
<text x="1732" y="1032" font-size="13.500" fill="#fff" textLength="26" lengthAdjust="spacingAndGlyphs">УКР</text>
<text x="1793" y="1020" font-size="14" fill="#fff" textLength="35" lengthAdjust="spacingAndGlyphs">11:02</text>
<text x="1777" y="1043" font-size="14" fill="#fff" textLength="69" lengthAdjust="spacingAndGlyphs">10.10.2024</text>
<path d="M1870 1017h19v15h-19z" fill="#fff"/><path d="M1873 1021h13M1873 1025h13M1873 1029h13" stroke="#444" stroke-width="1"/>
<circle cx="1888" cy="1037" r="9.500" fill="#2b2f34" stroke="#bbb" stroke-width="1"/><text x="1888" y="1042" font-size="14" font-weight="700" fill="#fff" text-anchor="middle">2</text>
<rect x="1916" y="1001" width="1" height="50" fill="#555"/>
</svg>
</body></html>
